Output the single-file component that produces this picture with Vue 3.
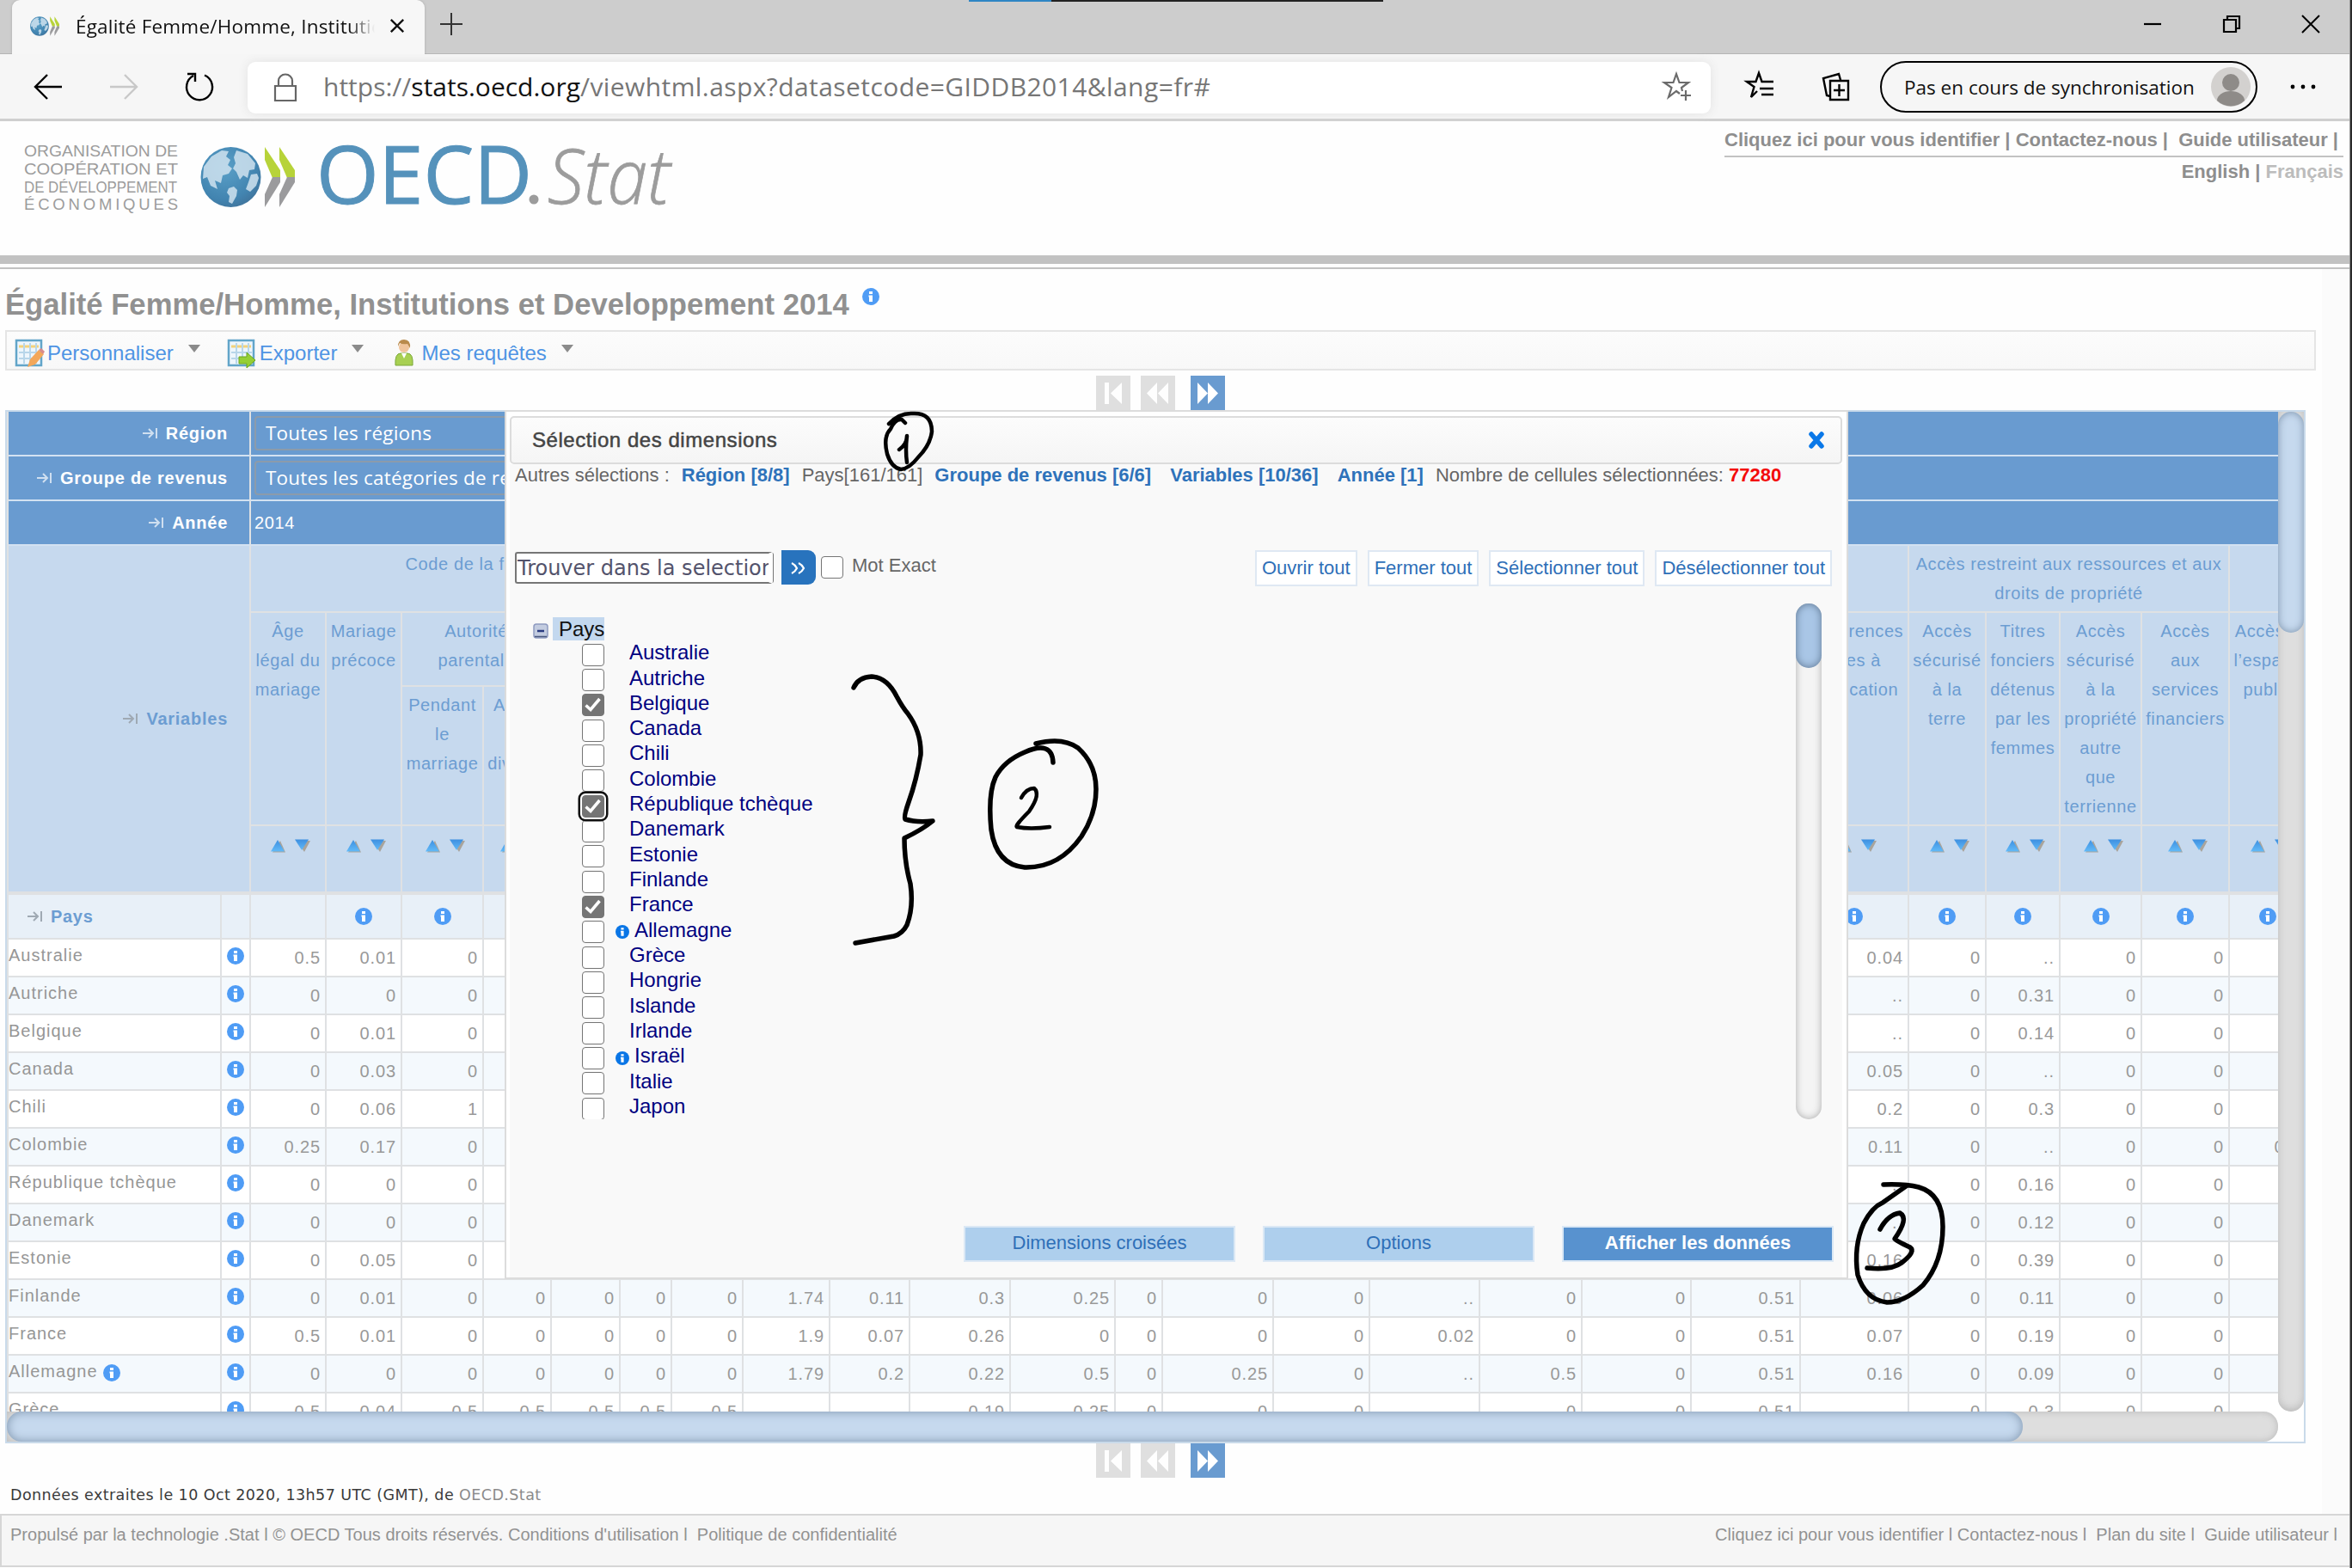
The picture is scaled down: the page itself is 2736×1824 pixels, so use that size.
<script setup>
const colWidths = [248, 34, 88, 88, 95, 79, 80, 60, 83, 101, 93, 117, 122, 55, 129, 112, 128, 119, 127, 127, 126, 90, 86, 95, 102, 89]
const columns = colWidths.map((w) => w + 'px').join(' ')

const filters = [
  { label: 'Région', value: 'Toutes les régions', select: true },
  { label: 'Groupe de revenus', value: 'Toutes les catégories de revenus', select: true },
  { label: 'Année', value: '2014', select: false },
]

// c = first column, cs = column span, r = first row, rs = row span
const heads = [
  { c: 3, cs: 7, r: 4, rs: 1, t: 'Code de la famille', shift: true },
  { c: 10, cs: 12, r: 4, rs: 1, t: '' },
  { c: 22, cs: 4, r: 4, rs: 1, t: 'Accès restreint aux ressources et aux\ndroits de propriété' },
  { c: 26, cs: 1, r: 4, rs: 1, t: '' },
  { c: 3, cs: 1, r: 5, rs: 2, t: 'Âge\nlégal du\nmariage' },
  { c: 4, cs: 1, r: 5, rs: 2, t: 'Mariage\nprécoce' },
  { c: 5, cs: 2, r: 5, rs: 1, t: 'Autorité\nparentale' },
  { c: 5, cs: 1, r: 6, rs: 1, t: 'Pendant\nle\nmarriage' },
  { c: 6, cs: 1, r: 6, rs: 1, t: 'Après\nle\ndivorce' },
  { c: 7, cs: 14, r: 5, rs: 2, t: '' },
  { c: 21, cs: 1, r: 5, rs: 2, t: 'Préférences\nliées à\nl’éducation' },
  { c: 22, cs: 1, r: 5, rs: 2, t: 'Accès\nsécurisé\nà la\nterre' },
  { c: 23, cs: 1, r: 5, rs: 2, t: 'Titres\nfonciers\ndétenus\npar les\nfemmes' },
  { c: 24, cs: 1, r: 5, rs: 2, t: 'Accès\nsécurisé\nà la\npropriété\nautre\nque\nterrienne' },
  { c: 25, cs: 1, r: 5, rs: 2, t: 'Accès\naux\nservices\nfinanciers' },
  { c: 26, cs: 1, r: 5, rs: 2, t: 'Accès à\nl’espace\npublic' },
]

const hidden = Array(15).fill('')
const mid = (first, last) => [...first, ...hidden, ...last]
const rows = [
  { n: 'Australie', v: mid(['0.5', '0.01', '0'], ['0.04', '0', '..', '0', '0', '']) },
  { n: 'Autriche', v: mid(['0', '0', '0'], ['..', '0', '0.31', '0', '0', '']) },
  { n: 'Belgique', v: mid(['0', '0.01', '0'], ['..', '0', '0.14', '0', '0', '']) },
  { n: 'Canada', v: mid(['0', '0.03', '0'], ['0.05', '0', '..', '0', '0', '']) },
  { n: 'Chili', v: mid(['0', '0.06', '1'], ['0.2', '0', '0.3', '0', '0', '']) },
  { n: 'Colombie', v: mid(['0.25', '0.17', '0'], ['0.11', '0', '..', '0', '0', '0.5']) },
  { n: 'République tchèque', v: mid(['0', '0', '0'], ['..', '0', '0.16', '0', '0', '']) },
  { n: 'Danemark', v: mid(['0', '0', '0'], ['..', '0', '0.12', '0', '0', '']) },
  { n: 'Estonie', v: mid(['0', '0.05', '0'], ['0.16', '0', '0.39', '0', '0', '']) },
  { n: 'Finlande', v: '0|0.01|0|0|0|0|0|1.74|0.11|0.3|0.25|0|0|0|..|0|0|0.51|0.06|0|0.11|0|0|'.split('|') },
  { n: 'France', v: '0.5|0.01|0|0|0|0|0|1.9|0.07|0.26|0|0|0|0|0.02|0|0|0.51|0.07|0|0.19|0|0|'.split('|') },
  { n: 'Allemagne', info: true, v: '0|0|0|0|0|0|0|1.79|0.2|0.22|0.5|0|0.25|0|..|0.5|0|0.51|0.16|0|0.09|0|0|'.split('|') },
  { n: 'Grèce', v: '0.5|0.04|0.5|0.5|0.5|0.5|0.5|..|..|0.19|0.25|0|0|0|..|0|0|0.51|..|0|0.3|0|0|'.split('|') },
]

const countries = [
  { n: 'Australie' }, { n: 'Autriche' }, { n: 'Belgique', on: true }, { n: 'Canada' }, { n: 'Chili' },
  { n: 'Colombie' }, { n: 'République tchèque', on: true, focus: true }, { n: 'Danemark' }, { n: 'Estonie' },
  { n: 'Finlande' }, { n: 'France', on: true }, { n: 'Allemagne', info: true }, { n: 'Grèce' }, { n: 'Hongrie' },
  { n: 'Islande' }, { n: 'Irlande' }, { n: 'Israël', info: true }, { n: 'Italie' }, { n: 'Japon' },
]

const treeActions = ['Ouvrir tout', 'Fermer tout', 'Sélectionner tout', 'Désélectionner tout']
</script>

<template>
  <div class="screen">
    <svg width="0" height="0" class="defs">
      <defs>
        <radialGradient id="globe" cx="0.4" cy="0.35" r="0.75">
          <stop offset="0" stop-color="#5aa0c8" />
          <stop offset="0.7" stop-color="#4284b0" />
          <stop offset="1" stop-color="#3f6f96" />
        </radialGradient>
        <linearGradient id="tri" x1="0" y1="0" x2="0" y2="1">
          <stop offset="0" stop-color="#3d8fe0" />
          <stop offset="1" stop-color="#62baf8" />
        </linearGradient>
        <symbol id="info" viewBox="0 0 20 20">
          <circle cx="10" cy="10" r="10" />
          <path d="M8 4h4v3H8zM7.500 8.500H12V16H8v-5.500h-.5z" fill="#fff" />
        </symbol>
        <symbol id="world" viewBox="0 0 110 72">
          <circle cx="35.500" cy="36" r="35" fill="url(#globe)" />
          <path d="M4 24L13 12 25 5 33 6 30 12 35 16 32 22 37 26 33 32 26 34 24 43 17 40 20 50 12 46 8 36 3 38z M42 5l13 4 9 11-1 7-6 1-2 9-5-3-4 5-4-9-4-4 3-6-2-7z M33 49l6-2 4 4-1 7-5 9-4-2 1-7-3-4z M59 33l7-1 2 5-3 9-7 7-5-3 3-8z" fill="#cfe2ee" opacity=".85" />
          <path d="M75 1l18 27v9H84L75 16z" fill="#b7d339" />
          <path d="M92 1l18 27v9h-9L92 16z" fill="#b7d339" />
          <path d="M93 36v6L75 71V56l9-20z" fill="#9b9b9d" />
          <path d="M110 36v6L92 71V56l9-20z" fill="#9b9b9d" />
        </symbol>
      </defs>
    </svg>

    <!-- window frame -->
    <div class="tabs">
      <div class="tab">
        <svg class="fav" width="34" height="23" viewBox="0 0 110 72" preserveAspectRatio="none"><use href="#world" width="110" height="72" /></svg>
        <span class="tabtitle">Égalité Femme/Homme, Institutions</span>
        <svg width="18" height="18" viewBox="0 0 20 18"><path d="M2 1l16 16M18 1L2 17" stroke="#111" stroke-width="2.600" /></svg>
      </div>
      <svg class="plus" width="28" height="28" viewBox="0 0 28 28"><path d="M14 1v26M1 14h26" stroke="#333" stroke-width="2" /></svg>
      <div class="wincontrols">
        <svg width="22" height="22" viewBox="0 0 22 22"><path d="M1 11h20" stroke="#000" stroke-width="2.200" /></svg>
        <svg width="22" height="22" viewBox="0 0 22 22" fill="none" stroke="#000" stroke-width="2.200"><path d="M2 6h14v14H2zM6 6V2h14v14h-4" /></svg>
        <svg width="22" height="22" viewBox="0 0 22 22"><path d="M1 1l20 20M21 1L1 21" stroke="#000" stroke-width="2" /></svg>
      </div>
    </div>
    <div class="toolbar">
      <svg class="nav" width="34" height="32" viewBox="0 0 34 32" fill="none" stroke="#000" stroke-width="2.400"><path d="M33 16H2M16 2L2 16l14 14" /></svg>
      <svg class="nav" width="34" height="32" viewBox="0 0 34 32" fill="none" stroke="#c8c8c8" stroke-width="2.400"><path d="M1 16h31M18 2l14 14-14 14" /></svg>
      <svg class="nav" width="34" height="34" viewBox="0 0 34 34" fill="none" stroke="#000" stroke-width="2.400"><path d="M23 3.500A15 15 0 1 1 10 4M3 2h9v9" /></svg>
      <div class="address">
        <svg width="28" height="34" viewBox="0 0 28 34" fill="none" stroke="#666" stroke-width="2.200"><path d="M2 15h24v17H2zM6 15V9a8 7.500 0 0 1 16 0v6" /></svg>
        <span class="url">https://<b>stats.oecd.org</b><span class="path">/viewhtml.aspx?datasetcode=GIDDB2014&amp;lang=fr#</span></span>
        <svg class="staradd" width="34" height="34" viewBox="0 0 34 34" fill="none" stroke="#6b6b6b" stroke-width="2.200"><path d="M20 24l-4-3-9 7 3.500-11L2 11h10.500L16 1l3.500 10H30l-8 6 1 4M27 20v12M21 26h12" /></svg>
      </div>
      <svg class="t1" width="34" height="34" viewBox="0 0 34 34" fill="none" stroke="#000" stroke-width="2.400"><path d="M14 22l-7 7 3.500-12L2 11h10.500L16 1l3.500 10H33M17 19h16M19 26h14" /></svg>
      <svg class="t2" width="34" height="34" viewBox="0 0 34 34" fill="none" stroke="#000" stroke-width="2.400"><path d="M10 10h21v22H10zM20.500 14v14M14 21h13M10 28L6 27 2 7l18-5 2 7" /></svg>
      <div class="pill">
        <span>Pas en cours de synchronisation</span>
        <svg width="46" height="46" viewBox="0 0 46 46"><circle cx="23" cy="23" r="23" fill="#d3d1cf" /><circle cx="23" cy="18" r="10" fill="#8e8b88" /><path d="M7 39a16 11 0 0 1 32 0 23 23 0 0 1-32 0z" fill="#8e8b88" /></svg>
      </div>
      <svg class="dots" width="32" height="8" viewBox="0 0 32 8"><circle cx="4" cy="4" r="2.400" /><circle cx="16" cy="4" r="2.400" /><circle cx="28" cy="4" r="2.400" /></svg>
    </div>

    <!-- site header -->
    <header class="site">
      <svg class="logo" width="790" height="110" viewBox="0 0 790 110">
        <g font-family="'Liberation Sans', Arial, sans-serif" font-size="18.500" fill="#9c9c9c">
          <text x="28" y="41" textLength="179" lengthAdjust="spacingAndGlyphs">ORGANISATION DE</text>
          <text x="28" y="62" textLength="179" lengthAdjust="spacingAndGlyphs">COOPÉRATION ET</text>
          <text x="28" y="83" textLength="178" lengthAdjust="spacingAndGlyphs">DE DÉVELOPPEMENT</text>
          <text x="28" y="103" textLength="179">ÉCONOMIQUES</text>
        </g>
        <use href="#world" x="233" y="29" width="110" height="72" />
        <text x="368" y="96" font-family="'Open Sans', 'Noto Sans', sans-serif" font-size="94" fill="#5592bb" stroke="#5592bb" stroke-width="1" textLength="251" lengthAdjust="spacingAndGlyphs">OECD</text>
        <circle cx="621" cy="91" r="5.500" fill="#9c9c9c" />
        <text x="637" y="96" font-family="'Open Sans', 'Noto Sans', sans-serif" font-size="88" font-weight="300" font-style="italic" fill="#9c9c9c" stroke="#9c9c9c" stroke-width=".8" textLength="143" lengthAdjust="spacingAndGlyphs">Stat</text>
      </svg>
      <div class="links">
        <div class="l1">Cliquez ici pour vous identifier | Contactez-nous |&nbsp; Guide utilisateur |</div>
        <div class="l2">English | <span>Français</span></div>
      </div>
    </header>

    <main class="body">
      <h1>Égalité Femme/Homme, Institutions et Developpement 2014
        <svg width="20" height="20" class="ic"><use href="#info" /></svg>
      </h1>
      <div class="menubar">
        <svg width="34" height="34" viewBox="0 0 34 34"><path d="M2 2h29v29H2z" fill="#eef6fc" stroke="#62a5c9" stroke-width="2.500" /><path d="M5 9h23" stroke="#f3d27c" stroke-width="3" /><path d="M5 16h24M5 23h24M11 5v24M18 5v24M25 5v24" stroke="#b8d6ea" stroke-width="2" /><path d="M15 33l3-9 10-11 6 5-10 12z" fill="#f3a75a" /><path d="M28 13l3-2 4 4-2 3z" fill="#d98a8a" /></svg>
        <span class="m1">Personnaliser</span><i class="caret c1"></i>
        <svg width="34" height="34" viewBox="0 0 34 34"><path d="M2 2h29v29H2z" fill="#eef6fc" stroke="#62a5c9" stroke-width="2.500" /><path d="M5 9h23" stroke="#f3d27c" stroke-width="3" /><path d="M5 16h24M5 23h24M11 5v24M18 5v24M25 5v24" stroke="#b8d6ea" stroke-width="2" /><path d="M14 21h9v-5l10 9-10 9v-5h-9z" fill="#95cf35" stroke="#6ba51d" /></svg>
        <span class="m2">Exporter</span><i class="caret c2"></i>
        <svg width="24" height="34" viewBox="0 0 24 34"><path d="M2 31q-1-14 6-14h8q7 0 6 14z" fill="#a8d052" stroke="#7da93b" /><path d="M9 17l3 6 3-6z" fill="#fff" /><circle cx="12" cy="10" r="6" fill="#f0c49c" /><path d="M5 9q0-8 7-8 8 0 7 10l-3-5q-6 1-9-1z" fill="#b98a4c" /></svg>
        <span class="m3">Mes requêtes</span><i class="caret c3"></i>
      </div>

      <div class="pager top">
        <span><svg width="40" height="40"><path d="M10 8h5v25h-5zM30 8v25L17 20.500z" fill="#fff" /></svg></span>
        <span><svg width="40" height="40"><path d="M19 8v25L7 20.500zM32 8v25L20 20.500z" fill="#fff" /></svg></span>
        <span class="go"><svg width="40" height="40"><path d="M8 8l12 12.500L8 33zM20 8l12 12.500L20 33z" fill="#fff" /></svg></span>
      </div>

      <section class="pivot">
        <div class="view">
          <div class="grid head" :style="{ gridTemplateColumns: columns }">
            <template v-for="(f, i) in filters" :key="f.label">
              <div class="lab dark" :style="{ gridRow: i + 1 }">
                <svg width="18" height="14" viewBox="0 0 18 14" fill="none" stroke="#cfdff0" stroke-width="2"><path d="M0 7h11M7 2l5 5-5 5M16 1v12" /></svg>{{ f.label }}
              </div>
              <div class="val dark" :style="{ gridRow: i + 1 }">
                <span :class="f.select ? 'select' : 'plain'">{{ f.value }}</span>
              </div>
            </template>
            <div class="lab vars">
              <svg width="18" height="14" viewBox="0 0 18 14" fill="none" stroke="#9fa9b3" stroke-width="2"><path d="M0 7h11M7 2l5 5-5 5M16 1v12" /></svg>Variables
            </div>
            <div v-for="(h, i) in heads" :key="'h' + i" class="hc" :class="{ shift: h.shift }"
              :style="{ gridColumn: h.c + ' / span ' + h.cs, gridRow: h.r + ' / span ' + h.rs }">{{ h.t }}</div>
            <div v-for="n in 24" :key="'s' + n" class="sort" :style="{ gridColumn: n + 2 }">
              <svg width="48" height="18" viewBox="0 0 48 18"><path d="M4 16.500L13 3l6 13.500z" fill="#a9a49c" /><path d="M2 15.500L10 2l8 13.500z" fill="url(#tri)" /><path d="M32 3h16l-7 13z" fill="#a9a49c" /><path d="M30 1.500h16L38 14z" fill="url(#tri)" /></svg>
            </div>
          </div>
          <div class="grid pays" :style="{ gridTemplateColumns: columns }">
            <div class="paysl"><svg width="18" height="14" viewBox="0 0 18 14" fill="none" stroke="#9fa9b3" stroke-width="2"><path d="M0 7h11M7 2l5 5-5 5M16 1v12" /></svg>Pays</div>
            <div></div>
            <div v-for="n in 24" :key="n"><svg v-if="n > 1" width="20" height="20" class="ic"><use href="#info" /></svg></div>
          </div>
          <div v-for="(r, i) in rows" :key="r.n" class="grid row" :class="{ alt: i % 2 }" :style="{ gridTemplateColumns: columns }">
            <div class="name">{{ r.n }}<svg v-if="r.info" width="20" height="20" class="ic"><use href="#info" /></svg></div>
            <div class="ri"><svg width="20" height="20" class="ic"><use href="#info" /></svg></div>
            <div v-for="(v, j) in r.v" :key="j" class="num">{{ v }}</div>
          </div>
        </div>
        <div class="vbar"><i></i></div>
        <div class="hbar"><i></i></div>
        <div></div>
      </section>

      <div class="pager">
        <span><svg width="40" height="40"><path d="M10 8h5v25h-5zM30 8v25L17 20.500z" fill="#fff" /></svg></span>
        <span><svg width="40" height="40"><path d="M19 8v25L7 20.500zM32 8v25L20 20.500z" fill="#fff" /></svg></span>
        <span class="go"><svg width="40" height="40"><path d="M8 8l12 12.500L8 33zM20 8l12 12.500L20 33z" fill="#fff" /></svg></span>
      </div>
      <p class="extract">Données extraites le 10 Oct 2020, 13h57 UTC (GMT), de <span>OECD.Stat</span></p>
    </main>

    <footer>
      <span>Propulsé par la technologie .Stat l © OECD Tous droits réservés. Conditions d'utilisation l&nbsp; Politique de confidentialité</span>
      <span>Cliquez ici pour vous identifier l Contactez-nous l&nbsp; Plan du site l&nbsp; Guide utilisateur l</span>
    </footer>

    <!-- modal -->
    <div class="dialog">
      <div class="dtitle"><span>Sélection des dimensions</span>
        <svg width="20" height="20" viewBox="0 0 20 20"><path d="M4 3l12 14M16 3L4 17" stroke="#0a78e8" stroke-width="5.500" stroke-linecap="round" /></svg>
      </div>
      <div class="dbody">
        <div class="sel">
          <span>Autres sélections :</span><b class="s1">Région [8/8]</b><span class="s2">Pays[161/161]</span><b class="s2">Groupe de revenus [6/6]</b><b class="s3">Variables [10/36]</b><b class="s3">Année [1]</b><span class="s2">Nombre de cellules sélectionnées:</span><strong>77280</strong>
        </div>
        <div class="find">
          <div class="input">Trouver dans la selection</div>
          <div class="gobtn"><svg width="18" height="14" viewBox="0 0 18 14" fill="none" stroke="#fff" stroke-width="2.200"><path d="M1 1q4 2 6 6-2 4-6 6M9 1q4 2 6 6-2 4-6 6" /></svg></div>
          <i class="cb"></i>
          <span class="exact">Mot Exact</span>
          <div class="acts"><span v-for="a in treeActions" :key="a">{{ a }}</span></div>
        </div>
        <div class="treewrap">
          <div class="tree">
            <div class="root">
              <svg width="18" height="18" viewBox="0 0 18 18"><rect x="1" y="1" width="16" height="16" rx="3" fill="#c3cce0" stroke="#8e9ac0" stroke-width="1.500" /><path d="M2 15.500h14" stroke="#4b5a80" stroke-width="1.500" /><path d="M5 9h8" stroke="#2a3c80" stroke-width="2.500" /></svg>
              <span>Pays</span>
            </div>
            <div v-for="c in countries" :key="c.n" class="item">
              <i class="cb" :class="{ on: c.on, focus: c.focus }"><svg v-if="c.on" width="25" height="25" viewBox="0 0 25 25"><path d="M4.500 13.500l5.500 5L20.500 6" fill="none" stroke="#fff" stroke-width="3.500" /></svg></i>
              <span class="slot"><svg v-if="c.info" width="16" height="16"><use href="#info" /></svg></span>
              <span class="cn" :class="{ off: c.info }">{{ c.n }}</span>
            </div>
          </div>
          <div class="dbar"><i></i></div>
        </div>
        <div class="btns"><span>Dimensions croisées</span><span>Options</span><span class="go">Afficher les données</span></div>
      </div>
    </div>

    <!-- pen annotations -->
    <svg class="ink" width="2736" height="1824" viewBox="0 0 2736 1824" fill="none" stroke="#000" stroke-width="5.500" stroke-linecap="round" stroke-linejoin="round">
      <path stroke-width="4.500" d="M1034 493Q1046 480 1062 481Q1084 480 1084 502Q1082 518 1068 532Q1058 545 1048 546Q1037 544 1032 528Q1027 508 1036 499Q1041 487 1049 488L1053 492" />
      <path stroke-width="4.500" d="M1046 523Q1055 517 1055 507Q1053 524 1055 538" />
      <path d="M993 800Q998 788 1014 787Q1032 788 1043 810Q1050 823 1056 830Q1072 852 1071 878Q1066 908 1057 933Q1051 950 1053 953Q1066 957 1085 955Q1073 965 1052 975Q1052 1003 1059 1028Q1063 1055 1055 1076Q1050 1086 1040 1089Q1012 1094 995 1097" />
      <path d="M1205 865Q1236 857 1254 870Q1275 889 1275 918Q1275 947 1258 973Q1232 1010 1192 1009Q1159 1006 1153 965Q1149 924 1158 904Q1168 885 1192 875Q1224 861 1225 887" />
      <path stroke-width="4.500" d="M1188 928Q1194 917 1203 917Q1211 924 1197 944Q1180 961 1183 962Q1198 965 1221 962" />
      <path d="M2191 1378Q2216 1377 2232 1381Q2260 1389 2260 1427Q2260 1468 2237 1495Q2215 1515 2195 1515Q2170 1512 2161 1483Q2156 1450 2168 1423Q2178 1404 2190 1399L2217 1380" />
      <path d="M2187 1430Q2196 1413 2210 1411Q2221 1417 2204 1441Q2205 1443 2222 1451Q2229 1456 2212 1469Q2200 1478 2172 1475" />
    </svg>
    <div class="topstrip"></div>
    <div class="edge"></div>
  </div>
</template>

<style>
html, body { margin: 0; background: #fff; }
</style>

<style scoped>
* { box-sizing: border-box; }
.screen { position: relative; width: 2736px; height: 1824px; overflow: hidden; background: #fefefe; display: flex; flex-direction: column; font-family: 'Liberation Sans', Arial, sans-serif; font-size: 20px; color: #999; white-space: nowrap; }
svg { display: block; flex: none; overflow: visible; }
.defs { position: absolute; }
.ic { fill: #4f9cf5; }
.topstrip { position: absolute; left: 1127px; top: 0; width: 482px; height: 2px; background: linear-gradient(90deg, #2f86c4 96px, #222 96px); }
.edge { position: absolute; right: 0; top: 0; width: 3px; height: 1824px; background: #2b2b2b; border-left: 1px solid #999; }

.tabs { height: 63px; background: #cdcdcd; border-bottom: 1px solid #b4b4b4; display: flex; align-items: flex-start; flex: none; }
.tab { width: 480px; height: 63px; margin-left: 14px; background: #f7f7f7; border-radius: 9px 9px 0 0; display: flex; align-items: center; padding: 0 22px 3px 21px; box-shadow: 0 0 3px #aaa; clip-path: inset(-4px -4px 0 -4px); }
.tabtitle { font-family: 'Open Sans', 'Noto Sans', sans-serif; font-size: 22.500px; letter-spacing: .2px; color: #111; width: 348px; margin: 0 17px 0 19px; overflow: hidden; -webkit-mask-image: linear-gradient(90deg, #000 318px, transparent 348px); mask-image: linear-gradient(90deg, #000 318px, transparent 348px); }
.plus { margin: 14px 0 0 17px; }
.wincontrols { margin: 17px 37px 0 auto; display: flex; gap: 70px; }
.toolbar { height: 78px; background: #f6f6f6; border-bottom: 3px solid #cfcfcf; display: flex; align-items: center; flex: none; padding-left: 39px; }
.nav { margin-right: 54px; }
.nav:nth-of-type(3) { margin-right: 39px; }
.address { width: 1702px; height: 60px; background: #fff; border-radius: 9px; box-shadow: 0 0 12px #e2e2e2; display: flex; align-items: center; padding: 0 22px 0 30px; margin-top: 2px; }
.url { font-family: 'Open Sans', 'Noto Sans', sans-serif; font-size: 30px; color: #767676; margin-left: 30px; padding-bottom: 2px; }
.url b { font-weight: 400; color: #111; }
.path { letter-spacing: .42px; }
.staradd { margin-left: auto; }
.t1 { margin-left: 40px; }
.t2 { margin-left: 55px; }
.pill { margin-left: 34px; margin-top: 1px; width: 439px; height: 60px; border: 2.500px solid #000; border-radius: 30px; display: flex; align-items: center; padding: 0 6px 0 26px; font-family: 'Open Sans', 'Noto Sans', sans-serif; font-size: 22.500px; color: #111; justify-content: space-between; }
.dots { margin-left: 37px; }

.site { height: 172px; flex: none; display: flex; justify-content: space-between; align-items: flex-start; position: relative; border-bottom: 2px solid #c2c2c2; background: linear-gradient(#c2c2c2, #c2c2c2) 0 156px / 100% 10px no-repeat #fefefe; }
.links { margin-right: 10px; font-weight: bold; font-size: 22px; color: #8e8e8e; text-align: right; }
.l1 { height: 42px; line-height: 43px; border-bottom: 2px solid #c2c2c2; width: 720px; text-align: left; }
.l2 { line-height: 34px; }
.l2 span { color: #bcbcbc; }

.body { height: 1448px; flex: none; background: linear-gradient(90deg, #fefefe 2701px, #fbfbfb 2701px); }
h1 { margin: 0; height: 71px; padding: 19px 0 0 6px; line-height: 44px; font-size: 34.650px; color: #919191; display: flex; gap: 15px; }
h1 svg { margin-top: 3px; }
.menubar { margin-left: 6px; width: 2688px; height: 47px; border: 2px solid #e5e5e5; background: linear-gradient(#fcfcfc, #f8f8f8); display: flex; align-items: center; padding: 6px 0 0 9px; color: #4f94e4; font-size: 24px; }
.menubar span { margin-left: 4px; padding-top: 1px; }
.caret { width: 0; height: 0; border: 7px solid transparent; border-top: 9px solid #8b8b8b; border-bottom: 0; margin: -10px 31px 0 17px; }
.c2 { margin: -10px 35px 0 17px; }
.m3 { margin-left: 8px !important; }
.pager { display: flex; padding-left: 1275px; height: 40px; }
.pager.top { margin-top: 6px; }
.pager span { width: 40px; height: 40px; background: #dedede; margin-right: 12px; opacity: .95; }
.pager span:nth-child(2) { margin-right: 18px; }
.pager .go { background: #699bd0; opacity: 1; }

.pivot { position: relative; margin-left: 6px; width: 2676px; height: 1202px; border: 2px solid #c9daea; display: grid; grid-template-columns: 2642px 30px; grid-template-rows: 1163px 35px; background: #fff; }
.view { overflow: hidden; border-left: 2px solid #dfe1e3; }
.grid { display: grid; width: max-content; }
.head { grid-template-rows: 52px 52px 52px 78px 86px 162px 80px; letter-spacing: .6px; }
.head > div { border-right: 2px solid #dfe1e3; border-bottom: 2px solid #dfe1e3; background: #c6d9ee; }
.head > .dark { background: #699bd0; border-bottom-color: #d3e2f2; color: #fff; }
.lab { grid-column: 1 / 3; display: flex; align-items: center; justify-content: flex-end; padding: 0 25px 0 0; gap: 9px; font-weight: bold; letter-spacing: .75px; }
.head > .vars { grid-row: 4 / 8; color: #6c9dd2; border-bottom-width: 4px; }
.val { grid-column: 3 / 27; display: flex; align-items: center; padding-left: 4px; }
.select { width: 700px; height: 40px; border: 2px solid #8b9bab; border-radius: 4px; font-family: 'Open Sans', 'Noto Sans', sans-serif; font-size: 22.500px; line-height: 35px; padding-left: 11px; letter-spacing: .2px; }
.hc { color: #6c9dd2; line-height: 34px; padding-top: 4px; white-space: pre; overflow: hidden; display: flex; justify-content: center; text-align: center; }
.head > .shift { padding-right: 41px; }
.head > .sort { grid-row: 7; border-bottom-width: 4px; display: flex; justify-content: center; padding: 14px 0 0 4px; }
.pays > div { height: 52px; border-right: 2px solid #dfe1e3; border-bottom: 2px solid #dfe1e3; background: #e8f0f8; display: flex; align-items: center; justify-content: center; }
.pays > .paysl { justify-content: flex-start; padding-left: 22px; gap: 9px; font-weight: bold; letter-spacing: .7px; color: #6c9dd2; }
.row > div { height: 44px; border-right: 2px solid #dfe1e3; border-bottom: 2px solid #dfe1e3; background: #fff; letter-spacing: .9px; display: flex; align-items: center; }
.alt > div { background: #f4f9fd; }
.row > .name { padding-bottom: 6px; color: #969696; letter-spacing: 1px; }
.name svg { margin: 3px 0 0 6px; }
.row > .ri { justify-content: center; padding-bottom: 4px; }
.row > .num { justify-content: flex-end; padding-right: 5px; }
.vbar { background: #dedede; border-radius: 0 0 15px 15px; box-shadow: inset 0 -3px 8px #bbb; }
.vbar i { display: block; height: 257px; border-radius: 15px; background: #c6d9ee; box-shadow: inset 0 0 10px #7d93ab; }
.hbar { background: #dedede; border-radius: 0 17px 17px 0; box-shadow: inset 0 0 8px #b8b8b8; }
.hbar i { display: block; height: 35px; width: 2345px; border-radius: 17px; background: #c6d9ee; box-shadow: inset 0 0 12px #7d93ab; }
.extract { margin: 5px 0 0 12px; font-family: 'DejaVu Sans', Verdana, sans-serif; font-size: 17.500px; letter-spacing: .43px; color: #3a3a3a; line-height: 30px; }
.extract span { color: #8b8b8b; }
footer { height: 62px; border: 2px solid #d6d6d6; background: #f6f6f6; display: flex; justify-content: space-between; padding: 9px 15px 0 10px; line-height: 26px; font-size: 20px; letter-spacing: .015px; color: #929292; }

.dialog { position: absolute; left: 587px; top: 477px; width: 1563px; height: 1011px; background: #fff; border: 2px solid #dcdcdc; padding: 5px 5px 0 4px; display: flex; flex-direction: column; }
.dtitle { height: 56px; border: 2px solid #dcdcdc; border-radius: 5px; background: linear-gradient(#fcfcfc, #f5f5f5); display: flex; justify-content: space-between; align-items: center; padding: 0 18px 0 24px; flex: none; color: #444; font-size: 24px; letter-spacing: .55px; -webkit-text-stroke: .5px #444; }
.dbody { flex: 1; background: #f9f9f9; display: flex; flex-direction: column; }
.sel { height: 26px; line-height: 25px; display: flex; padding-left: 6px; font-size: 22px; color: #666; }
.sel b { color: #2e72ba; }
.s1 { margin-left: 14px; }
.s2 { margin-left: 14px; }
.s3 { margin-left: 22px; }
.sel strong { color: #f30b0b; margin-left: 6px; }
.find { margin-top: 74px; height: 42px; display: flex; padding-left: 6px; font-size: 22px; color: #666; }
.input { width: 300px; height: 37px; margin-top: 2px; border: 2px solid #767676; border-right-width: 5px; border-right-color: #fff; outline: 0; border-radius: 3px; background: #fff; font-family: 'DejaVu Sans', Verdana, sans-serif; font-size: 24px; color: #53536c; line-height: 35px; padding-left: 1px; overflow: hidden; box-shadow: 2px 0 0 -1px #767676; }
.gobtn { margin-left: 10px; width: 40px; height: 40px; background: #2873bd; border-radius: 0 9px 9px 0; display: flex; align-items: center; justify-content: center; padding-top: 2px; }
.cb { width: 26px; height: 26px; border: 1.500px solid #757575; border-radius: 4px; background: #fff; flex: none; display: block; }
.find .cb { margin: 7px 0 0 6px; }
.exact { margin-left: 10px; line-height: 36px; }
.acts { margin: 0 12px 0 auto; display: flex; gap: 12px; color: #2e6fb8; }
.acts span { border: 2px solid #dfe8f3; background: #fff; line-height: 37px; padding: 0 6px; }
.treewrap { margin-top: 20px; height: 600px; display: flex; justify-content: space-between; }
.tree { padding: 16px 0 0 27px; overflow: hidden; width: 900px; font-size: 24px; color: #000080; }
.root { height: 29px; display: flex; color: #111; }
.root svg { margin: 7px 5px 0 0; }
.root span { height: 27px; line-height: 27px; background: #c3d8ef; padding-left: 7px; }
.item { height: 29.330px; display: flex; align-items: center; padding-left: 57px; }
.item .cb { position: relative; }
.cb.on { background: #757575; }
.cb.on svg { margin: -1px; }
.cb.focus { box-shadow: 0 0 0 2px #fff, 0 0 0 4.500px #101010; z-index: 2; }
.slot { width: 29px; display: flex; justify-content: center; padding-left: 12px; }
.slot svg { fill: #0a76e6; }
.cn { padding-bottom: 5px; }
.cn.off { margin-left: 6px; }
.dbar { width: 30px; margin-right: 24px; border-radius: 15px; background: #f4f4f4; box-shadow: inset 0 0 8px #aaa; }
.dbar i { display: block; height: 75px; border-radius: 15px; background: #a9c6e6; box-shadow: inset 0 0 10px #5d7590; }
.btns { margin: 124px 10px 0 auto; display: flex; gap: 32px; }
.btns span { width: 316px; height: 42px; border: 2px solid #dbe8f5; background: #aecfed; color: #2e6fb8; font-size: 22px; line-height: 36px; text-align: center; }
.btns .go { background: #5892cf; color: #fff; font-weight: bold; }
.ink { position: absolute; left: 0; top: 0; }
</style>
